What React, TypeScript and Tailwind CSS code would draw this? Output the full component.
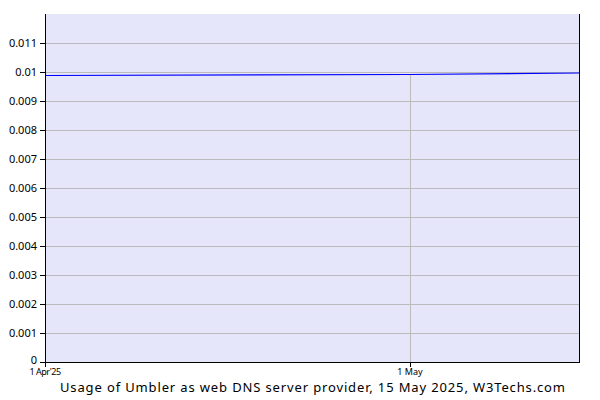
export default function App() {
  const labels = ["0.011","0.01","0.009","0.008","0.007","0.006","0.005","0.004","0.003","0.002","0.001","0"];
  return (
    <div className="w-[600px] h-[400px] bg-white font-['DejaVu_Sans',sans-serif]">
      <svg width="600" height="400" viewBox="0 0 600 400">
        <rect x="45" y="14" width="535" height="348" fill="#e6e6fa" />
        {labels.map((l, i) => {
          const y = 43 + i * 29;
          return (
            <g key={l}>
              {i < 11 && <line x1="45" x2="580" y1={y + 0.5} y2={y + 0.5} stroke="#bbbbbb" />}
              <line x1="40" x2="45" y1={y + 0.5} y2={y + 0.5} stroke="#000" />
              <text x="37" y={i === 11 ? y + 2 : y + 4} fontSize="11" textAnchor="end" fill="#000">{l}</text>
            </g>
          );
        })}
        <line x1="410.5" x2="410.5" y1="75" y2="362" stroke="#bbbbbb" />
        <line x1="410.5" x2="410.5" y1="362" y2="367" stroke="#000" />
        <line x1="45.5" x2="45.5" y1="362" y2="367" stroke="#000" />
        <polyline points="45,75.5 410,74.5 580,73" fill="none" stroke="#0000ff" strokeWidth="1.2" />
        <line x1="45.5" x2="45.5" y1="14" y2="362" stroke="#000" />
        <line x1="579.5" x2="579.5" y1="14" y2="362" stroke="#000" />
        <line x1="45" x2="580" y1="362.5" y2="362.5" stroke="#000" />
        <text x="45" y="375" fontSize="9" textAnchor="middle" letterSpacing="-0.5">1 Apr'25</text>
        <text x="410" y="375" fontSize="9" textAnchor="middle">1 May</text>
        <text x="60" y="392" fontSize="13" textLength="505" lengthAdjust="spacing">Usage of Umbler as web DNS server provider, 15 May 2025, W3Techs.com</text>
      </svg>
    </div>
  );
}
